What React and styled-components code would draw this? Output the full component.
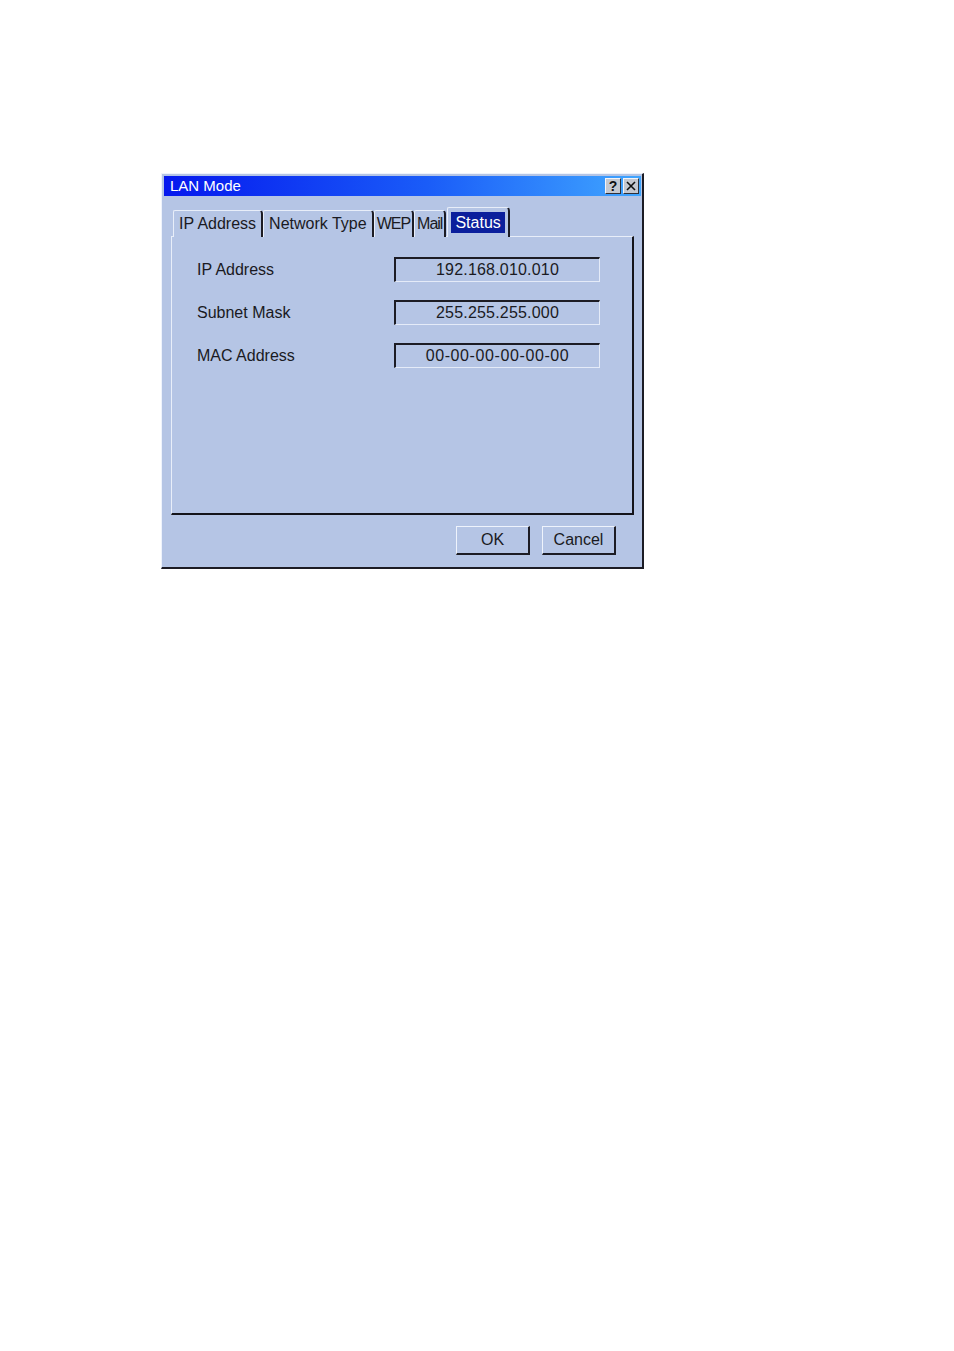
import React from "react";
import styled, { createGlobalStyle } from "styled-components";

const GlobalStyle = createGlobalStyle`
  html, body {
    margin: 0;
    padding: 0;
    background: #ffffff;
  }
  body {
    font-family: "Liberation Sans", Arial, sans-serif;
  }
`;

const Page = styled.div`
  width: 954px;
  height: 1351px;
  padding: 173px 0 0 161px;
  box-sizing: border-box;
`;

const Window = styled.div`
  box-sizing: border-box;
  width: 483px;
  height: 396px;
  background: #b5c5e5;
  border-top: 1px solid #eef3fc;
  border-left: 1px solid #eef3fc;
  border-right: 2px solid #1c1c24;
  border-bottom: 2px solid #1c1c24;
  padding: 2px 1px 0 2px;
  display: flex;
  flex-direction: column;
`;

const TitleBar = styled.div`
  height: 20px;
  display: flex;
  align-items: center;
  justify-content: space-between;
  padding: 0 2px 0 6px;
  background: linear-gradient(to right, #0518ee 0%, #1a5cf8 55%, #40a6ff 100%);
`;

const Title = styled.span`
  color: #ffffff;
  font-size: 15px;
  line-height: 20px;
`;

const TitleButtons = styled.div`
  display: flex;
  gap: 2px;
`;

const TitleButton = styled.div`
  box-sizing: border-box;
  width: 16px;
  height: 16px;
  background: #c4c8d0;
  border-top: 1px solid #f4f4f8;
  border-left: 1px solid #f4f4f8;
  border-right: 1px solid #303038;
  border-bottom: 1px solid #303038;
  display: flex;
  align-items: center;
  justify-content: center;
  color: #101010;
  font-size: 14px;
  font-weight: bold;
  line-height: 1;
`;

const Body = styled.div`
  flex: 1;
  display: flex;
  flex-direction: column;
  padding: 12px 7px 0 7px;
`;

const TabRow = styled.div`
  display: flex;
  align-items: flex-end;
  height: 29px;
  padding-left: 2px;
  position: relative;
  z-index: 1;
  margin-bottom: -1px;
`;

const Tab = styled.div`
  box-sizing: border-box;
  flex: none;
  margin-left: ${(p) => (p.$active ? "1px" : "0")};
  height: ${(p) => (p.$active ? "30px" : "27px")};
  padding: ${(p) =>
    p.$active ? "4px 3px 0 3px" : p.$narrow ? "2px 1px 0 1px" : "2px 4px 0 4px"};
  display: flex;
  align-items: flex-start;
  background: #b5c5e5;
  border-top: 1px solid #e8eef9;
  border-left: 1px solid #e8eef9;
  border-right: 2px solid #1c1c24;
  border-top-right-radius: 4px;
  border-top-left-radius: 2px;
  font-size: 16px;
  line-height: 21px;
  white-space: nowrap;
`;

const TabLabel = styled.span`
  display: inline-block;
  padding: ${(p) => (p.$active ? "0 4px" : "0 1px")};
  letter-spacing: ${(p) => (p.$narrow ? "-1px" : "0")};
  background: ${(p) => (p.$active ? "#0b1f9c" : "transparent")};
  color: ${(p) => (p.$active ? "#ffffff" : "#1a1a22")};
`;

const Panel = styled.div`
  box-sizing: border-box;
  height: 279px;
  border-top: 1px solid #e8eef9;
  border-left: 1px solid #e8eef9;
  border-right: 2px solid #14141a;
  border-bottom: 2px solid #14141a;
  padding: 20px 0 0 25px;
  display: flex;
  flex-direction: column;
  gap: 18px;
`;

const Row = styled.div`
  display: grid;
  grid-template-columns: 197px 206px;
  align-items: center;
  height: 25px;
`;

const Label = styled.span`
  font-size: 16px;
  color: #1a1a22;
`;

const Field = styled.div`
  box-sizing: border-box;
  height: 25px;
  border-top: 2px solid #1c1c24;
  border-left: 2px solid #1c1c24;
  border-right: 1px solid #e4ebf8;
  border-bottom: 1px solid #e4ebf8;
  text-align: center;
  font-size: 16px;
  line-height: 22px;
  letter-spacing: ${(p) => (p.$wide ? "0.6px" : "0.2px")};
  color: #1a1a22;
`;

const Footer = styled.div`
  display: flex;
  justify-content: flex-end;
  gap: 12px;
  padding: 11px 18px 0 0;
`;

const Button = styled.div`
  box-sizing: border-box;
  width: ${(p) => p.$width}px;
  height: 29px;
  border-top: 1px solid #eef3fc;
  border-left: 1px solid #eef3fc;
  border-right: 2px solid #1c1c24;
  border-bottom: 2px solid #1c1c24;
  display: flex;
  align-items: center;
  justify-content: center;
  font-size: 16px;
  color: #1a1a22;
`;

const tabs = [
  { name: "IP Address" },
  { name: "Network Type" },
  { name: "WEP", narrow: true },
  { name: "Mail", narrow: true },
  { name: "Status", active: true },
];

const rows = [
  { label: "IP Address", value: "192.168.010.010" },
  { label: "Subnet Mask", value: "255.255.255.000" },
  { label: "MAC Address", value: "00-00-00-00-00-00", wide: true },
];

export default function App() {
  return (
    <Page>
      <GlobalStyle />
      <Window>
        <TitleBar>
          <Title>LAN Mode</Title>
          <TitleButtons>
            <TitleButton>?</TitleButton>
            <TitleButton>
              <svg width="10" height="10" viewBox="0 0 10 10">
                <path d="M1 1 L9 9 M9 1 L1 9" stroke="#101010" strokeWidth="1.6" />
              </svg>
            </TitleButton>
          </TitleButtons>
        </TitleBar>
        <Body>
          <TabRow>
            {tabs.map((t) => (
              <Tab key={t.name} $active={t.active} $narrow={t.narrow}>
                <TabLabel $active={t.active} $narrow={t.narrow}>
                  {t.name}
                </TabLabel>
              </Tab>
            ))}
          </TabRow>
          <Panel>
            {rows.map((r) => (
              <Row key={r.label}>
                <Label>{r.label}</Label>
                <Field $wide={r.wide}>{r.value}</Field>
              </Row>
            ))}
          </Panel>
          <Footer>
            <Button $width={74}>OK</Button>
            <Button $width={74}>Cancel</Button>
          </Footer>
        </Body>
      </Window>
    </Page>
  );
}
